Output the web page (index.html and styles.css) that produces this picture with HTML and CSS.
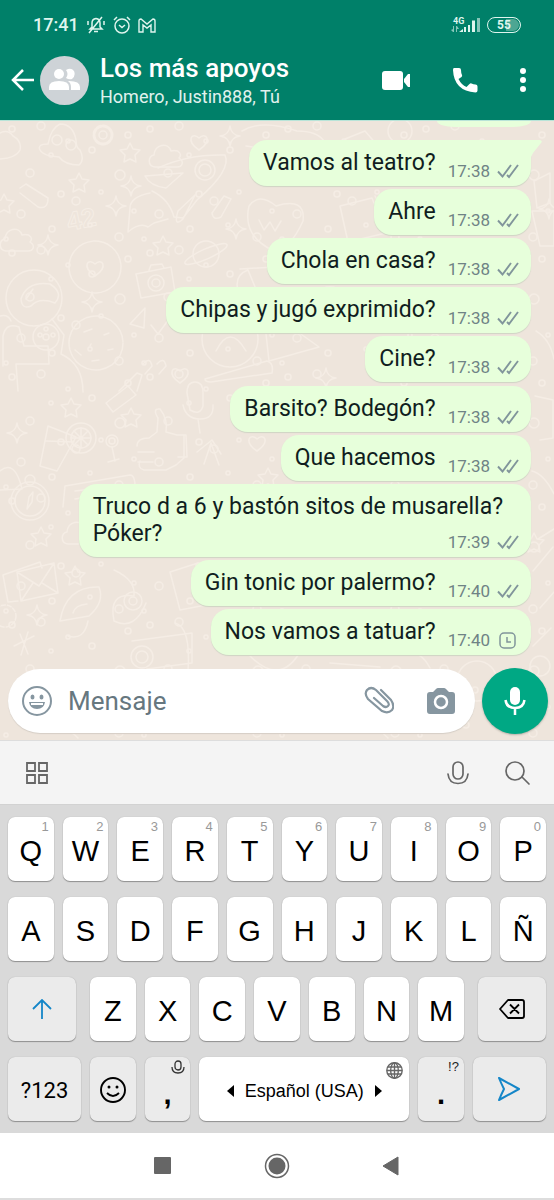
FILE: index.html
```html
<!DOCTYPE html>
<html lang="es">
<head>
<meta charset="utf-8">
<meta name="viewport" content="width=device-width, initial-scale=1">
<title>Los más apoyos</title>
<link rel="stylesheet" href="styles.css">
</head>
<body>
<svg class="defs" aria-hidden="true">
  <defs>
    <symbol id="ticks" viewBox="0 0 22 18"><path d="M1 9.500l4.500 5L14 3M10 13l2 2L21 3" fill="none" stroke="currentColor" stroke-width="1.900"/></symbol>
    <symbol id="star" viewBox="-12 -12 24 24" overflow="visible"><path d="M0-10l3 6 7 1-5 5 1 7-6-3-6 3 1-7-5-5 7-1z"/></symbol>
    <symbol id="spark" viewBox="-12 -12 24 24" overflow="visible"><path d="M0-10q1 9 10 10q-9 1-10 10q-1-9-10-10q9-1 10-10z"/></symbol>
    <symbol id="heart" viewBox="-12 -12 24 24" overflow="visible"><path d="M0 8C-14-1-7-11 0-4C7-11 14-1 0 8z"/></symbol>
    <symbol id="cloud" viewBox="-20 -14 40 28" overflow="visible"><path d="M-12 11c-8-1-7-11-1-12c1-11 14-13 17-4c9-2 11 4 8 7c6 4 3 9-2 9z"/></symbol>
    <pattern id="dots" class="dot-shapes" width="138" height="124" patternUnits="userSpaceOnUse">
      <circle cx="12" cy="8" r="3"/><circle cx="41" cy="5" r="4"/><circle cx="92" cy="29" r="3"/><circle cx="30" cy="52" r="4"/><circle cx="61" cy="73" r="3"/><circle cx="76" cy="80" r="4"/><circle cx="120" cy="54" r="5"/><circle cx="101" cy="71" r="2"/><circle cx="21" cy="93" r="4"/><circle cx="52" cy="108" r="3"/><circle cx="119" cy="116" r="4"/><circle cx="134" cy="90" r="2"/><circle cx="128" cy="14" r="3"/><circle cx="51" cy="34" r="2"/><circle cx="6" cy="118" r="2"/><circle cx="90" cy="104" r="2"/><circle cx="68" cy="20" r="2"/>
    </pattern>
  </defs>
</svg>

<div class="screen">
  <header class="top">
    <div class="status">
      <span class="clock">17:41</span>
      <svg width="20" height="18" viewBox="0 0 20 18" fill="none" stroke="currentColor" stroke-width="1.500"><path d="M4 13h12l-2-2V7q0-4-4-4.500Q6 3 6 7v4zM8 15.500h4M3 17L16 1M2 5v4M18 5v4"/></svg>
      <svg width="18" height="18" viewBox="0 0 18 18" fill="none" stroke="currentColor" stroke-width="1.500"><circle cx="9" cy="10" r="7"/><path d="M6 9l3 2.500L12 9M1 4l3-3M17 4l-3-3"/></svg>
      <svg class="gmail" width="18" height="15" viewBox="0 0 18 15" fill="none" stroke="currentColor" stroke-width="1.400"><path d="M1 14V3Q1 1 3 1L9 6L15 1Q17 1 17 3V14H13V7L9 10L5 7V14z"/></svg>
      <div class="network">
        <span>4G</span>
        <svg width="29" height="16" viewBox="0 0 29 16" fill="currentColor"><g opacity=".6"><path d="M2 9h1v6H2zM0 13l2 2v-3zM5 9h1v6H5zM6 9l2 3H6z"/><rect x="26" y="1" width="3" height="14"/></g><path d="M8 15l4-3v3zM13 10h2v5h-2zM17 8h2v7h-2zM21 3.500h3V15h-3z"/></svg>
      </div>
      <div class="battery">55</div>
    </div>
    <div class="appbar">
      <button class="back" aria-label="Atrás"><svg width="24" height="24" viewBox="0 0 24 24" fill="none" stroke="currentColor" stroke-width="2.500"><path d="M23 12H2M12 2L2 12l10 10"/></svg></button>
      <div class="avatar"><svg width="32" height="24" viewBox="0 0 32 24" fill="currentColor"><circle cx="10" cy="6" r="5"/><path d="M0 22v-3q0-6 10-6t10 6v3z"/><path d="M17 2q5-3 8 1q2 5-2 8q-3 1-6-1q3-4 0-8zM20 13q11 0 11 6v3h-9v-3q0-4-3-6z"/></svg></div>
      <div class="who"><h1>Los más apoyos</h1><p>Homero, Justin888, Tú</p></div>
      <div class="actions">
        <button aria-label="Videollamada"><svg width="30" height="20" viewBox="0 0 30 20" fill="currentColor"><rect x="1" y="1" width="21" height="19" rx="3"/><path d="M23 9l4-5h2v13h-2l-4-5z"/></svg></button>
        <button aria-label="Llamada"><svg width="26" height="26" viewBox="0 0 26 26" fill="currentColor"><path d="M2 1h5q2 0 2 2 0 3 1 5 .5 1-.5 2l-3 2q3 6 8 8l3-3q1-1 2-.5 2 1 4 1 2 0 2 2v4q0 2-2 2Q2 24 1 3q0-2 1-2z"/></svg></button>
        <button aria-label="Más opciones"><svg width="8" height="24" viewBox="0 0 8 24" fill="currentColor"><circle cx="4" cy="3" r="3"/><circle cx="4" cy="12" r="3"/><circle cx="4" cy="21" r="3"/></svg></button>
      </div>
    </div>
  </header>

  <main class="chat">
    <svg class="doodles" viewBox="0 0 554 620" preserveAspectRatio="xMidYMin slice" aria-hidden="true">
      <rect class="dotfill" width="554" height="620"/>
      <path d="M0 12q8-4 13 3q9 5 7 14q-4 8-20 9M40 29q-3-6 8-6q3-16 12-20q13 0 16 16q0 8 4 10q5 10-1 15q-14 0-20-8q-16-1-19-7z"/>
      <circle cx="57" cy="19" r="5"/><circle cx="71" cy="24" r="5"/>
      <circle cx="103" cy="14" r="4"/><circle cx="103" cy="14" r="9" stroke-dasharray="4 2" stroke-width="3"/>
      <path d="M145 55l38-3-17 15q-16-2-21-12zM158 47q30-14 67-13q7 15-28 45l-14 18-9-1q-5-18-22-26M195 74l-12 24q-10 9-5-8zM150 72q-20 4-20 15l-2 24q12-10 20-5l6-4 14-4"/>
      <circle cx="205" cy="49" r="10"/><circle cx="205" cy="49" r="6"/>
      <path d="M20 67l6-4 22 14q0 12-10 9L20 72M212 92l12-17 7 3-10 18q-8 4-9-4z"/>
      <text x="69" y="110" transform="rotate(-12 69 110)">42</text>
      <circle cx="95" cy="146" r="26" stroke-dasharray="9 1"/><circle cx="206" cy="133" r="13"/><ellipse cx="206" cy="133" rx="23" ry="5" transform="rotate(-24 206 133)"/>
      <path d="M136 153l35-7 4 25-34 6zM149 149l2-5 11-1 2 4"/><circle cx="156" cy="162" r="8"/><circle cx="156" cy="162" r="4"/>
      <circle cx="34" cy="177" r="28"/><path d="M21 178q6-18 29-15q14 9 5 19q-16-6-24 3q-9 4-10-7zM26 178l7-10M3 245V215q3-14 16-9l5 19h24l1 18H16l2 27M52 198l12 16-3 19q22 10 22 38M0 195q8-2 11 5"/>
      <circle cx="46" cy="216" r="13"/><circle cx="46" cy="216" r="3"/><circle cx="46" cy="208" r="2"/><circle cx="53" cy="214" r="2"/><circle cx="40" cy="214" r="2"/>
      <circle cx="96" cy="222" r="27" stroke-dasharray="12 1"/><path d="M84 211l8-3M104 214l5-2M75 229l6 5M92 240l7-1M108 229l5-1M90 225l1-2"/>
      <path d="M130 203l15-16-1 20zM151 204l7 9 14-19M143 243q7-8 9 2l-7 8M157 243q7-8 9 2l-7 8M119 270l18-18 5 2-5 16M205 258l62-18q7 2 5 12l-61 9q-6 0-6-3"/>
      <circle cx="230" cy="218" r="28"/><path d="M216 230q14-28 30 0M240 148l34-2M238 170q-4-16 10-21l10 24"/>
      <path d="M106 282l22-17 8 9-23 17zM187 272q0-11 8-11t8 11v13q-3 10-13 4zM183 284q3 14 17 14t13-14M198 298l2 14"/>
      <path d="M48 305l28 11-19 34-17-5zM46 320l28 1"/><circle cx="81" cy="317" r="15"/><circle cx="81" cy="317" r="10"/><path d="M81 307v20M71 317h20M74 310l14 14M88 310l-14 14"/>
      <circle cx="112" cy="320" r="6"/><circle cx="112" cy="320" r="3"/><path d="M112 326l3 14M108 341l11-3M137 325q0-8 12-8l8-6 1-14q-6-10 2-9q8 10 6 23l11 3h7v23l-8 7-10 5h-22q-7-2-4-9M138 331h16M138 341h15M177 314h9l1 22h-9"/>
      <path d="M197 331l15-12 9 14M211 322l-7 21M211 322l8 22M63 386l2-21 65-11q6 0 5 18M75 370l42-5M75 378l18-3"/>
      <circle cx="30" cy="380" r="19"/><circle cx="30" cy="380" r="15"/><circle cx="30" cy="359" r="5"/><path d="M27 388l2-12 4-5-1 10zM0 350q15-12 22 18l-22 1"/>
      <path d="M3 454l37-13 2 6M3 454l5 27 10-1M17 451l37-9 4 30-37 8zM17 451l22 14 15-23M21 480l12-18M58 472l-16-10M60 500q6-35 39-34q6 15-10 29zM73 492q2-8 14-9M88 500q-4 20-20 15M114 449q22 10 20 26q-26-4-20 25q21 10 32-18"/>
      <circle cx="133" cy="480" r="9"/><circle cx="133" cy="480" r="4"/><circle cx="5" cy="495" r="11" stroke-dasharray="4 2"/>
      <path d="M170 451l28-9 8 42-26 5zM132 520l60-8v30l-45 6M175 502q16 4 13 48M14 525l20-10M20 513l8 20M28 511l-7 23"/><circle cx="142" cy="536" r="11"/><circle cx="142" cy="536" r="6"/>
      <path d="M249 85q10-14 27 0q30-9 27 15q-14 31-31 29q-30-15-23-44zM259 99l5 10 6-8 5 9 6-10M340 85l32-8 14 35-38 9zM375 75l18 36"/>
      <path d="M242 10q20-12 55 0q20 0 27 10q-26 14-78 5M534 60l16-8v30l-13 5zM532 90h22v35h-14zM345 18l20-8 12 14M250 198q40-20 60 5M263 186l56 40-50 14zM536 210q14 8 18 28M535 275l18 4v38l-13 2M532 350q12 3 22 23M538 418l16-10M533 450l20-24M540 487l14-16M533 525l18-18"/>
      <circle cx="330" cy="184" r="18"/><circle cx="400" cy="10" r="12"/><circle cx="477" cy="560" r="20"/><circle cx="540" cy="545" r="10"/><path d="M250 535q30 30 50-4M330 542l50 4M390 531q28-7 40 16M15 590h32M40 611q25-9 38 6M121 611q20-12 30 0M340 612q30-15 48 5"/>
      <use href="#star" x="118" y="20" width="24" height="24"/><use href="#star" x="67" y="50" width="24" height="24"/><use href="#star" x="151" y="113" width="24" height="24"/><use href="#star" x="-8" y="71" width="24" height="24"/><use href="#star" x="59" y="275" width="24" height="24"/><use href="#star" x="119" y="285" width="24" height="24"/><use href="#star" x="256" y="345" width="24" height="24"/><use href="#star" x="29" y="404" width="24" height="24"/><use href="#star" x="63" y="443" width="24" height="24"/><use href="#star" x="522" y="410" width="24" height="24"/>
      <use href="#spark" x="218" y="3" width="24" height="24"/><use href="#spark" x="119" y="53" width="24" height="24"/><use href="#spark" x="104" y="73" width="24" height="24"/><use href="#spark" x="224" y="96" width="24" height="24"/><use href="#spark" x="36" y="112" width="24" height="24"/><use href="#spark" x="80" y="169" width="24" height="24"/><use href="#spark" x="5" y="300" width="24" height="24"/><use href="#spark" x="25" y="482" width="24" height="24"/><use href="#spark" x="537" y="76" width="24" height="24"/><use href="#spark" x="314" y="245" width="24" height="24"/>
      <use href="#heart" x="187" y="9" width="24" height="24"/><use href="#heart" x="83" y="135" width="24" height="24"/><use href="#heart" x="168" y="242" width="24" height="24"/><use href="#heart" x="245" y="310" width="24" height="24"/>
      <use href="#cloud" x="147" y="21" width="40" height="28"/><use href="#cloud" x="-2" y="105" width="40" height="28"/><use href="#cloud" x="60" y="398" width="40" height="28"/>
    </svg>

    <ol class="thread">
      <li class="earlier" aria-hidden="true"></li>
      <li class="msg first"><p>Vamos al teatro?</p><div class="meta"><time>17:38</time><svg class="tick"><use href="#ticks"/></svg></div><svg class="tail" width="11" height="17" viewBox="0 0 11 17"><path d="M0 0h9q3 1 1 3L2 13L0 17z"/></svg></li>
      <li class="msg"><p>Ahre</p><div class="meta"><time>17:38</time><svg class="tick"><use href="#ticks"/></svg></div></li>
      <li class="msg"><p>Chola en casa?</p><div class="meta"><time>17:38</time><svg class="tick"><use href="#ticks"/></svg></div></li>
      <li class="msg"><p>Chipas y jugó exprimido?</p><div class="meta"><time>17:38</time><svg class="tick"><use href="#ticks"/></svg></div></li>
      <li class="msg"><p>Cine?</p><div class="meta"><time>17:38</time><svg class="tick"><use href="#ticks"/></svg></div></li>
      <li class="msg"><p>Barsito? Bodegón?</p><div class="meta"><time>17:38</time><svg class="tick"><use href="#ticks"/></svg></div></li>
      <li class="msg"><p>Que hacemos</p><div class="meta"><time>17:38</time><svg class="tick"><use href="#ticks"/></svg></div></li>
      <li class="msg long"><p class="lead">Truco d a 6 y bastón sitos de musarella?</p><p>Póker?</p><div class="meta"><time>17:39</time><svg class="tick"><use href="#ticks"/></svg></div></li>
      <li class="msg"><p>Gin tonic por palermo?</p><div class="meta"><time>17:40</time><svg class="tick"><use href="#ticks"/></svg></div></li>
      <li class="msg"><p>Nos vamos a tatuar?</p><div class="meta"><time>17:40</time><svg class="tick" viewBox="0 0 22 18" fill="none" stroke="currentColor" stroke-width="1.500"><rect x="3" y="2" width="15" height="15" rx="4"/><path d="M10 6v5h4"/></svg></div></li>
    </ol>

    <form class="composer">
      <div class="field">
        <button type="button" aria-label="Emojis"><svg width="30" height="30" viewBox="0 0 30 30"><circle cx="15" cy="15" r="14" fill="none" stroke="currentColor" stroke-width="2"/><g fill="currentColor"><ellipse cx="10.500" cy="11" rx="2" ry="2.500"/><ellipse cx="19.500" cy="11" rx="2" ry="2.500"/><path d="M7 16h16q-1 7-8 7t-8-7z"/></g><path d="M9 18h12" stroke="#fff" stroke-width="2"/></svg></button>
        <input type="text" placeholder="Mensaje" aria-label="Mensaje">
        <button type="button" aria-label="Adjuntar"><svg width="30" height="30" viewBox="0 0 30 30" fill="none" stroke="currentColor" stroke-width="2.200" stroke-linecap="round"><path d="M17 4l10 10q4 6 1 10-4 4-10 1L4 13Q0 8 3 4q4-4 9 0l11 11q3 3 1 5-2 2-5 0l-9-8"/></svg></button>
        <button type="button" class="camera" aria-label="Cámara"><svg width="28" height="26" viewBox="0 0 28 26"><path fill="currentColor" d="M9 1q1-1 2-1h6q1 0 2 1l3 3h3q3 0 3 3v16q0 3-3 3H3q-3 0-3-3V7q0-3 3-3h3z"/><circle cx="14" cy="14" r="6" fill="none" stroke="#fff" stroke-width="2.500"/></svg></button>
      </div>
      <button type="button" class="record" aria-label="Nota de voz"><svg width="22" height="30" viewBox="0 0 22 30"><rect x="6" y="1" width="10" height="18" rx="5" fill="currentColor"/><path d="M1.500 14q1 8 9.500 8t9.500-8M11 22v7" fill="none" stroke="currentColor" stroke-width="2.500"/></svg></button>
    </form>
  </main>

  <section class="keyboard" aria-label="Teclado">
    <div class="tools">
      <button class="grid-btn" aria-label="Menú"><svg width="22" height="22" viewBox="0 0 22 22" fill="none" stroke="currentColor" stroke-width="1.800"><path d="M1 1h8v8H1zM13 1h8v8h-8zM1 13h8v8H1zM13 13h8v8h-8z"/></svg></button>
      <button aria-label="Dictado"><svg width="22" height="24" viewBox="0 0 22 24" fill="none" stroke="currentColor" stroke-width="1.700" stroke-linecap="round"><rect x="6" y="1" width="10" height="17" rx="5"/><path d="M1 13q1 9.500 10 9.500T21 13"/></svg></button>
      <button aria-label="Buscar"><svg width="26" height="26" viewBox="0 0 26 26" fill="none" stroke="currentColor" stroke-width="1.700" stroke-linecap="round"><circle cx="10" cy="11" r="9"/><path d="M17 17l7 7"/></svg></button>
    </div>
    <div class="keys">
      <button class="key">Q<small>1</small></button><button class="key">W<small>2</small></button><button class="key">E<small>3</small></button><button class="key">R<small>4</small></button><button class="key">T<small>5</small></button><button class="key">Y<small>6</small></button><button class="key">U<small>7</small></button><button class="key">I<small>8</small></button><button class="key">O<small>9</small></button><button class="key">P<small>0</small></button>
      <button class="key">A</button><button class="key">S</button><button class="key">D</button><button class="key">F</button><button class="key">G</button><button class="key">H</button><button class="key">J</button><button class="key">K</button><button class="key">L</button><button class="key">Ñ</button>
      <button class="key gray wide shift" aria-label="Mayúsculas"><svg width="20" height="20" viewBox="0 0 20 20" fill="none" stroke="currentColor" stroke-width="1.800"><path d="M10 20V1M1 10l9-9 9 9"/></svg></button><button class="key">Z</button><button class="key">X</button><button class="key">C</button><button class="key">V</button><button class="key">B</button><button class="key">N</button><button class="key">M</button><button class="key gray wide delete" aria-label="Borrar"><svg width="26" height="20" viewBox="0 0 26 20" fill="none" stroke="currentColor" stroke-width="1.800" stroke-linejoin="round"><path d="M9 1h14q2 0 2 2v14q0 2-2 2H9L1 10zM11 5.500l9 9M20 5.500l-9 9"/></svg></button>
      <button class="key gray wide symbols">?123</button>
      <button class="key gray emoji" aria-label="Emoji"><svg width="26" height="26" viewBox="0 0 26 26" fill="none" stroke="currentColor" stroke-width="1.900"><circle cx="13" cy="13" r="12"/><path d="M7 16q6 6 12 0"/><circle cx="9" cy="10" r="1.500" fill="currentColor" stroke="none"/><circle cx="17" cy="10" r="1.500" fill="currentColor" stroke="none"/></svg></button>
      <button class="key gray punct">,<svg class="corner" width="14" height="14" viewBox="0 0 14 14" fill="none" stroke="currentColor" stroke-width="1.300"><rect x="4" y="1" width="6" height="9" rx="3"/><path d="M1 7q0 6 6 6t6-6"/></svg></button>
      <button class="key space"><svg width="7" height="12" viewBox="0 0 7 12"><path d="M7 0v12L0 6z"/></svg><span>Español (USA)</span><svg width="7" height="12" viewBox="0 0 7 12"><path d="M0 0v12l7-6z"/></svg><svg class="corner globe" width="17" height="17" viewBox="0 0 17 17" fill="none" stroke="currentColor" stroke-width="1.400"><circle cx="8.500" cy="8.500" r="7.700"/><ellipse cx="8.500" cy="8.500" rx="3.800" ry="7.700"/><path d="M8.500 1v15M1 8.500h15M2 5h13M2 12h13"/></svg></button>
      <button class="key gray punct">.<small class="alt">!?</small></button>
      <button class="key gray wide send" aria-label="Enviar"><svg width="24" height="26" viewBox="0 0 24 26" fill="none" stroke="currentColor" stroke-width="2" stroke-linejoin="round"><path d="M2 2l20 11L2 24q2-5 5-11q-3-6-5-11z"/></svg></button>
    </div>
  </section>

  <nav class="navbar" aria-label="Sistema">
    <button aria-label="Recientes"><svg width="18" height="18" viewBox="0 0 18 18"><rect width="17" height="17" rx="1" fill="currentColor"/></svg></button>
    <button aria-label="Inicio"><svg width="26" height="26" viewBox="0 0 26 26"><circle cx="13" cy="13" r="11.500" fill="none" stroke="currentColor" stroke-width="1.500"/><circle cx="13" cy="13" r="8.500" fill="currentColor"/></svg></button>
    <button aria-label="Volver"><svg width="18" height="20" viewBox="0 0 18 20"><path d="M16 1v18L1 10z" fill="currentColor" stroke="currentColor" stroke-linejoin="round"/></svg></button>
  </nav>
</div>
</body>
</html>
```
FILE: styles.css
```css
* { box-sizing: border-box; }
body { margin: 0; font-family: Roboto, sans-serif; }
h1, p, ol { margin: 0; padding: 0; }
button { border: 0; padding: 0; background: none; color: inherit; font: inherit; display: flex; align-items: center; justify-content: center; }
svg { flex: none; display: block; }
.defs { position: absolute; width: 0; height: 0; }

.screen { min-height: 100vh; display: flex; flex-direction: column; }

/* Header */
.top { background: #008069; color: #fff; padding-bottom: 10px; }
.status { height: 50px; display: flex; align-items: center; gap: 7px; padding: 0 33px; color: #dff5ee; }
.clock { font-size: 18px; font-weight: 500; line-height: 20px; }
.network { margin-left: auto; }
.network span { display: block; font-size: 9px; line-height: 8px; font-weight: 700; padding-left: 2px; margin-bottom: -8px; }
.battery { width: 34px; height: 16px; border: 1px solid #dff5ee; border-radius: 8px; background: linear-gradient(90deg, transparent 55%, #4da693 55%); box-shadow: inset 0 0 0 1px #008069; font-size: 12px; line-height: 14px; font-weight: 700; text-align: center; }
.appbar { height: 60px; display: flex; align-items: center; padding: 0 27px 0 11px; }
.back { margin-right: 5px; }
.avatar { width: 49px; height: 49px; border-radius: 50%; background: #ced3d7; display: flex; align-items: center; justify-content: center; flex: none; }
.who { flex: 1; min-width: 0; margin-left: 11px; padding-top: 4px; white-space: nowrap; }
.who h1 { font-size: 26px; line-height: 30px; font-weight: 500; }
.who p { font-size: 18px; line-height: 28px; color: #e0f2ee; }
.actions { display: flex; align-items: center; gap: 41px; }

/* Conversation */
.chat { position: relative; flex: 1; display: flex; flex-direction: column; background: #eee5dc; overflow: hidden; border-top: 1px solid #b8e4d8; }
.doodles { position: absolute; inset: 0; width: 100%; height: 100%; fill: none; stroke: #f5ede5; stroke-width: 1.500; stroke-linejoin: round; stroke-linecap: round; }
.doodles text { font: 700 26px "Liberation Sans", sans-serif; stroke-width: 1; }
.dotfill { fill: url(#dots); stroke: none; }
.dot-shapes { fill: none; stroke: #f5ede5; stroke-width: 1.500; }
.thread { position: relative; flex: 1; display: flex; flex-direction: column; justify-content: space-between; align-items: flex-end; list-style: none; padding: 0 23px 13px 17px; }
.earlier { width: 94px; height: 6px; margin-bottom: 10px; border-radius: 0 0 18px 18px / 0 0 6px 6px; background: #e7ffdb; }
.msg { position: relative; max-width: 88%; display: flex; align-items: flex-end; gap: 12px; padding: 9px 12px 5px 14px; border-radius: 18px; background: #e7ffdb; box-shadow: 0 1px 1px #cfd4c4; }
.msg p { font-size: 23px; line-height: 27px; color: #101d20; padding-bottom: 5px; }
.first { border-top-right-radius: 0; }
.tail { position: absolute; left: 100%; top: 0; fill: #e7ffdb; }
.meta { display: flex; align-items: center; gap: 7px; color: #6f8385; font-size: 17px; line-height: 20px; }
.tick { width: 22px; height: 18px; color: #81959b; }
/* The time sits beside the last line of a longer message */
.long { width: 88%; flex-wrap: wrap; justify-content: space-between; row-gap: 0; }
.long .lead { flex: 1 0 100%; padding-bottom: 0; }

.composer { position: relative; display: flex; align-items: center; gap: 7px; padding: 0 6px 6px 8px; }
.field { flex: 1; min-width: 0; height: 64px; display: flex; align-items: center; padding: 0 20px 0 14px; border-radius: 32px; background: #fff; color: #8696a0; box-shadow: 0 1px 1px #d5cec6; }
.field input { flex: 1; min-width: 0; border: 0; outline: 0; background: none; padding: 0 0 0 16px; font: 26px/32px Roboto, sans-serif; color: #101d20; }
.field input::placeholder { color: #66777f; opacity: 1; }
.camera { margin-left: 33px; }
.record { width: 66px; height: 66px; border-radius: 50%; background: #00a884; color: #fff; box-shadow: 0 1px 2px #b5b0a8; }

/* Keyboard */
.tools { height: 64px; display: flex; align-items: center; gap: 36px; padding: 0 23px 0 26px; background: #f4f4f4; color: #666; border-top: 1px solid #ddd; }
.grid-btn { margin-right: auto; }
.keys { display: grid; grid-template-columns: repeat(20, 1fr); gap: 16px 9px; padding: 12px 8px 12px; background: #d9d9d9; border-top: 1px solid #d2d2d2; }
.key { position: relative; grid-column: span 2; height: 64px; padding-top: 4px; border-radius: 7px; background: #fff; box-shadow: 0 1px 1px #8f8f8f, 0 0 1px #aaa; color: #000; font: 29px/32px "Liberation Sans", Arial, sans-serif; }
.key small { position: absolute; top: 2px; right: 5px; font-size: 13px; line-height: 16px; color: #999; }
.gray { background: #ebebeb; }
.wide { grid-column: span 3; }
.shift { margin-right: 5px; color: #1486c8; padding: 0; }
.delete { margin-left: 5px; padding: 0; }
.emoji { padding-top: 2px; }
.symbols { font: 22px/26px Roboto, sans-serif; }
.punct { padding-top: 10px; font-weight: 700; }
.corner { position: absolute; top: 3px; right: 5px; color: #333; }
.key .alt { font-size: 13px; font-weight: 400; color: #222; }
.space { grid-column: span 8; gap: 11px; font-size: 18px; line-height: 22px; }
.globe { top: 5px; right: 6px; color: #666; }
.send { color: #1486c8; padding: 0; }

.navbar { height: 67px; display: flex; align-items: center; justify-content: center; gap: 92px; background: #fff; color: #666; border-bottom: 2px solid #ddd; }
```
